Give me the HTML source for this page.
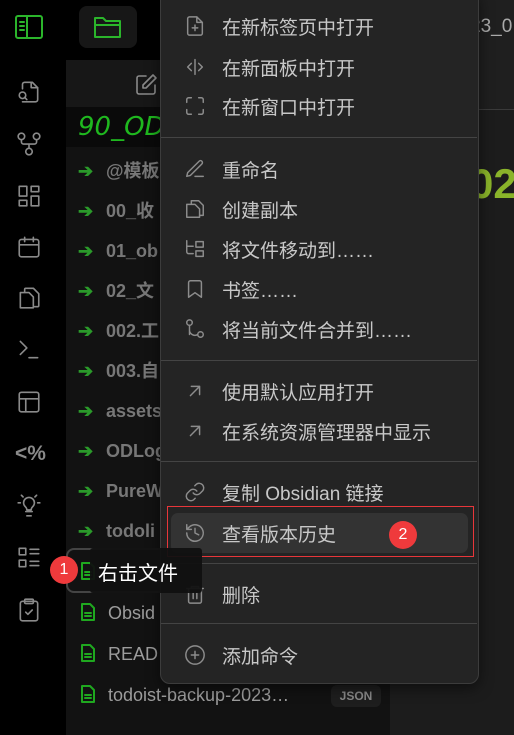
<!DOCTYPE html>
<html><head><meta charset="utf-8"><style>
*{margin:0;padding:0;box-sizing:border-box}
body{width:514px;height:735px;overflow:hidden;background:#000;font-family:"Liberation Sans","Noto Sans CJK SC",sans-serif;position:relative}
.abs{position:absolute}
svg{fill:none;stroke-linecap:round;stroke-linejoin:round}
.ri svg{stroke:#8a8a8a;stroke-width:1.5;width:26px;height:26px}
.row{position:absolute;left:78px;height:40px;line-height:40px;font-size:18px;font-weight:bold;color:#777;white-space:nowrap}
.row .ar{color:#2a9a2a;display:inline-block;width:28px;font-size:18px}
.frow{position:absolute;left:80px;height:40px;line-height:40px;font-size:18px;color:#9c9c9c;white-space:nowrap}
.frow svg{vertical-align:middle;position:relative;top:-2px}
.mi{position:absolute;left:184px;display:flex;align-items:center;font-size:19px;color:#c8c8c8;white-space:nowrap;height:40px}
.mi svg{stroke:#8c8c8c;stroke-width:1.6;width:22px;height:22px;margin-right:16px}
.sep{position:absolute;left:161px;width:316px;height:1px;background:#444}
</style></head><body>
<div class="abs" style="left:0;top:0;width:514px;height:60px;background:#000"></div>
<svg class="abs" style="left:14px;top:14px;width:32px;height:28px;stroke:#2bb52b;stroke-width:2"><rect x="2" y="2" width="26" height="22" rx="2"/><line x1="13" y1="2" x2="13" y2="24"/><line x1="6" y1="8" x2="10" y2="8"/><line x1="6" y1="12" x2="10" y2="12"/><line x1="6" y1="16" x2="10" y2="16"/></svg>
<div class="abs" style="left:79px;top:6px;width:58px;height:42px;background:#171717;border-radius:8px"></div>
<svg class="abs" style="left:93px;top:14px;width:30px;height:26px;stroke:#2bb52b;stroke-width:2"><path d="M2 4h8l3 3h14v16H2z M2 11h25"/></svg>
<div class="abs" style="left:390px;top:0;width:124px;height:735px;background:#1c1c1c"></div>
<div class="abs" style="left:390px;top:0;width:124px;height:110px;background:#1f1f1f;border-bottom:1px solid #3a3a3a"></div>
<div class="abs" style="left:470px;top:16px;font-size:19px;color:#aaa">23_0</div>
<div class="abs" style="left:470px;top:160px;font-size:42px;font-weight:bold;color:#8ab42a">02</div>
<div class="abs" style="left:66px;top:60px;width:324px;height:675px;background:#121212"></div>
<div class="abs" style="left:66px;top:60px;width:324px;height:47px;background:#171717"></div>
<svg class="abs" style="left:134px;top:72px;width:26px;height:26px;stroke:#8a8a8a;stroke-width:1.6"><path d="M12 4H5a2 2 0 0 0-2 2v14a2 2 0 0 0 2 2h14a2 2 0 0 0 2-2v-7"/><path d="M19 3l3 3-10 10H9v-3z"/></svg>
<div class="abs" style="left:66px;top:107px;width:324px;height:40px;background:#0a0a0a"></div>
<div class="abs" style="left:78px;top:112px;font-size:26px;font-style:italic;color:#1fb81f;font-family:'DejaVu Sans',sans-serif">90_ODL</div>
<div class="row" style="top:151px"><span class="ar">➔</span>@模板</div>
<div class="row" style="top:191px"><span class="ar">➔</span>00_收</div>
<div class="row" style="top:231px"><span class="ar">➔</span>01_ob</div>
<div class="row" style="top:271px"><span class="ar">➔</span>02_文</div>
<div class="row" style="top:311px"><span class="ar">➔</span>002.工</div>
<div class="row" style="top:351px"><span class="ar">➔</span>003.自</div>
<div class="row" style="top:391px"><span class="ar">➔</span>assets</div>
<div class="row" style="top:431px"><span class="ar">➔</span>ODLog</div>
<div class="row" style="top:471px"><span class="ar">➔</span>PureW</div>
<div class="row" style="top:511px"><span class="ar">➔</span>todoli</div>
<div class="abs" style="left:66px;top:548px;width:140px;height:45px;border:2px solid #444;border-radius:8px"></div>
<svg class="abs" style="left:80px;top:561px;width:16px;height:20px;stroke:#1fa81f;stroke-width:2"><path d="M2 2h8l4 4v12H2z M5 11h6 M5 14h6"/></svg>
<div class="frow" style="top:593px"><svg style="width:16px;height:20px;stroke:#1fa81f;stroke-width:2;margin-right:12px"><path d="M2 2h8l4 4v12H2z M5 11h6 M5 14h6"/></svg>Obsid</div>
<div class="frow" style="top:634px"><svg style="width:16px;height:20px;stroke:#1fa81f;stroke-width:2;margin-right:12px"><path d="M2 2h8l4 4v12H2z M5 11h6 M5 14h6"/></svg>READ</div>
<div class="frow" style="top:675px"><svg style="width:16px;height:20px;stroke:#1fa81f;stroke-width:2;margin-right:12px"><path d="M2 2h8l4 4v12H2z M5 11h6 M5 14h6"/></svg>todoist-backup-2023…</div>
<div class="abs" style="left:331px;top:685px;width:50px;height:22px;background:#1e1e1e;border-radius:6px;color:#888;font-size:12px;font-weight:bold;text-align:center;line-height:22px">JSON</div>
<div class="ri">
<svg class="abs" style="left:16px;top:79px" viewBox="0 0 24 24"><path d="M6 21h12a2 2 0 0 0 2-2V8l-5-5H8a2 2 0 0 0-2 2v4"/><path d="M14 3v5h6"/><circle cx="6" cy="15" r="3"/><path d="M8 17l2 2"/></svg>
<svg class="abs" style="left:16px;top:131px" viewBox="0 0 24 24"><circle cx="5" cy="5" r="3"/><circle cx="19" cy="5" r="3"/><circle cx="12" cy="19" r="3"/><path d="M5 8v2a2 2 0 0 0 2 2h10a2 2 0 0 0 2-2V8 M12 12v4"/></svg>
<svg class="abs" style="left:16px;top:183px" viewBox="0 0 24 24"><rect x="3" y="3" width="7" height="9"/><rect x="14" y="3" width="7" height="5"/><rect x="14" y="12" width="7" height="9"/><rect x="3" y="16" width="7" height="5"/></svg>
<svg class="abs" style="left:16px;top:234px" viewBox="0 0 24 24"><rect x="3" y="5" width="18" height="16" rx="2"/><path d="M3 10h18 M8 3v4 M16 3v4"/></svg>
<svg class="abs" style="left:16px;top:285px" viewBox="0 0 24 24"><path d="M8 6V4a1 1 0 0 1 1-1h7l5 5v11a1 1 0 0 1-1 1h-3"/><path d="M4 7h8l4 4v10H4z"/></svg>
<svg class="abs" style="left:16px;top:336px" viewBox="0 0 24 24"><path d="M4 5l6 6-6 6 M12 20h8"/></svg>
<svg class="abs" style="left:16px;top:389px" viewBox="0 0 24 24"><rect x="3" y="3" width="18" height="18" rx="2"/><path d="M3 9h18 M9 9v12"/></svg>
<div class="abs" style="left:15px;top:442px;font-size:21px;color:#8a8a8a;font-weight:bold">&lt;%</div>
<svg class="abs" style="left:16px;top:492px" viewBox="0 0 24 24"><path d="M9 18h6 M10 22h4 M15 14c1-1 2-2 2-4a5 5 0 0 0-10 0c0 2 1 3 2 4 .7.7 1 1.5 1 2.5h4c0-1 .3-1.8 1-2.5z M2 10h2 M20 10h2 M5 3l1.5 1.5 M19 3l-1.5 1.5"/></svg>
<svg class="abs" style="left:16px;top:545px" viewBox="0 0 24 24"><rect x="3" y="3" width="6" height="6"/><rect x="3" y="14" width="6" height="6"/><path d="M13 4h8 M13 8h8 M13 15h8 M13 19h8"/></svg>
<svg class="abs" style="left:16px;top:597px" viewBox="0 0 24 24"><rect x="4" y="4" width="16" height="18" rx="2"/><rect x="8" y="2" width="8" height="4" rx="1"/><path d="M9 14l2 2 4-4"/></svg>
</div>
<div class="abs" style="left:160px;top:-10px;width:319px;height:694px;background:#242424;border:1px solid #3c3c3c;border-radius:10px;box-shadow:0 4px 14px rgba(0,0,0,.5)"></div>
<div class="mi" style="top:6px"><svg viewBox="0 0 24 24"><path d="M14 2H6a2 2 0 0 0-2 2v16a2 2 0 0 0 2 2h12a2 2 0 0 0 2-2V8z M14 2v6h6 M12 11v6 M9 14h6"/></svg>在新标签页中打开</div>
<div class="mi" style="top:47px"><svg viewBox="0 0 24 24"><path d="M12 4v16 M8 8l-4 4 4 4 M16 8l4 4-4 4"/></svg>在新面板中打开</div>
<div class="mi" style="top:86px"><svg viewBox="0 0 24 24"><path d="M3 8V5a2 2 0 0 1 2-2h3 M16 3h3a2 2 0 0 1 2 2v3 M21 16v3a2 2 0 0 1-2 2h-3 M8 21H5a2 2 0 0 1-2-2v-3"/></svg>在新窗口中打开</div>
<div class="sep" style="top:137px"></div>
<div class="mi" style="top:149px"><svg viewBox="0 0 24 24"><path d="M12 20h9 M16.5 3.5a2.1 2.1 0 0 1 3 3L7 19l-4 1 1-4z"/></svg>重命名</div>
<div class="mi" style="top:189px"><svg viewBox="0 0 24 24"><path d="M8 6V3h8l5 5v11h-4"/><path d="M3 7h9l5 5v9H3z"/></svg>创建副本</div>
<div class="mi" style="top:229px"><svg viewBox="0 0 24 24"><path d="M3 3v12a2 2 0 0 0 2 2h5 M3 9h7 M13 4h8v6h-8z M13 14h8v6h-8z"/></svg>将文件移动到……</div>
<div class="mi" style="top:269px"><svg viewBox="0 0 24 24"><path d="M19 21l-7-5-7 5V5a2 2 0 0 1 2-2h10a2 2 0 0 1 2 2z"/></svg>书签……</div>
<div class="mi" style="top:309px"><svg viewBox="0 0 24 24"><circle cx="6" cy="5" r="3"/><circle cx="18" cy="18" r="3"/><path d="M6 8v10 M6 12a6 6 0 0 0 9 6"/></svg>将当前文件合并到……</div>
<div class="sep" style="top:360px"></div>
<div class="mi" style="top:371px"><svg viewBox="0 0 24 24"><path d="M7 17L17 7 M8 7h9v9"/></svg>使用默认应用打开</div>
<div class="mi" style="top:411px"><svg viewBox="0 0 24 24"><path d="M7 17L17 7 M8 7h9v9"/></svg>在系统资源管理器中显示</div>
<div class="sep" style="top:461px"></div>
<div class="mi" style="top:472px"><svg viewBox="0 0 24 24"><path d="M10 13a5 5 0 0 0 7.5.5l3-3a5 5 0 0 0-7-7l-1.7 1.7 M14 11a5 5 0 0 0-7.5-.5l-3 3a5 5 0 0 0 7 7l1.7-1.7"/></svg>复制 Obsidian 链接</div>
<div class="abs" style="left:171px;top:513px;width:297px;height:40px;background:#333;border-radius:7px"></div>
<div class="abs" style="left:167px;top:506px;width:307px;height:51px;border:1.5px solid #e8363a"></div>
<div class="mi" style="top:513px"><svg viewBox="0 0 24 24"><path d="M3 12a9 9 0 1 0 3-6.7L3 8 M3 3v5h5 M12 7v5l4 2"/></svg>查看版本历史</div>
<div class="abs" style="left:389px;top:521px;width:28px;height:28px;border-radius:50%;background:#ef3a3c;color:#fff;font-size:16px;text-align:center;line-height:28px">2</div>
<div class="sep" style="top:563px"></div>
<div class="mi" style="top:574px"><svg viewBox="0 0 24 24"><path d="M3 6h18 M8 6V4h8v2 M5 6v14a2 2 0 0 0 2 2h10a2 2 0 0 0 2-2V6 M10 11v6 M14 11v6"/></svg>删除</div>
<div class="sep" style="top:623px"></div>
<div class="mi" style="top:635px"><svg viewBox="0 0 24 24"><circle cx="12" cy="12" r="10"/><path d="M12 8v8 M8 12h8"/></svg>添加命令</div>
<div class="abs" style="left:90px;top:548px;width:112px;height:45px;background:#111;border-radius:3px;opacity:.95"></div>
<div class="abs" style="left:98px;top:557px;font-size:20px;color:#fff">右击文件</div>
<div class="abs" style="left:50px;top:556px;width:28px;height:28px;border-radius:50%;background:#ef3a3c;color:#fff;font-size:16px;text-align:center;line-height:28px">1</div>
</body></html>
